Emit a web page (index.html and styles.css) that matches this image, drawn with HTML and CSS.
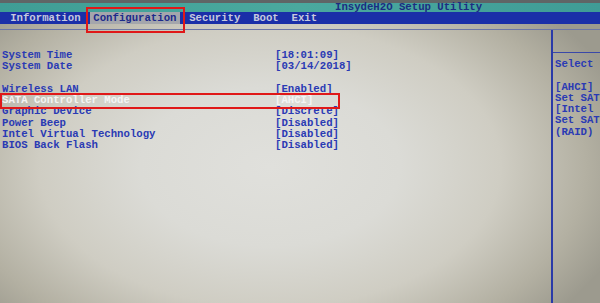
FILE: index.html
```html
<!DOCTYPE html>
<html>
<head>
<meta charset="utf-8">
<link rel="stylesheet" href="styles.css">
</head>
<body>
<div class="screen">
  <div class="topstrip"></div>
  <div class="titlebar"><span class="title">InsydeH2O Setup Utility</span></div>
  <div class="menubar">
    <span class="menu-item">Information</span>
    <span class="menu-item active marked">Configuration</span>
    <span class="menu-item">Security</span>
    <span class="menu-item">Boot</span>
    <span class="menu-item">Exit</span>
  </div>
  <div class="rule"></div>
  <div class="main">
    <div class="left">
      <div class="row"><span class="label">System Time</span><span class="value">[18:01:09]</span></div>
      <div class="row"><span class="label">System Date</span><span class="value">[03/14/2018]</span></div>
      <div class="row blank"></div>
      <div class="row"><span class="label">Wireless LAN</span><span class="value">[Enabled]</span></div>
      <div class="row selected marked-row"><span class="label">SATA Controller Mode</span><span class="value">[AHCI]</span></div>
      <div class="row"><span class="label">Graphic Device</span><span class="value">[Discrete]</span></div>
      <div class="row"><span class="label">Power Beep</span><span class="value">[Disabled]</span></div>
      <div class="row"><span class="label">Intel Virtual Technology</span><span class="value">[Disabled]</span></div>
      <div class="row"><span class="label">BIOS Back Flash</span><span class="value">[Disabled]</span></div>
    </div>
    <div class="right">
      <div class="help-head"></div>
      <div class="help">
        <div class="hrow">Select</div>
        <div class="hrow"></div>
        <div class="hrow">[AHCI]</div>
        <div class="hrow">Set SAT</div>
        <div class="hrow">[Intel</div>
        <div class="hrow">Set SAT</div>
        <div class="hrow">(RAID)</div>
      </div>
    </div>
  </div>
</div>
</body>
</html>
```
FILE: styles.css
```css
html, body {
  margin: 0;
  padding: 0;
}
body {
  width: 600px;
  height: 303px;
  overflow: hidden;
  font-family: "Liberation Mono", "DejaVu Sans Mono", monospace;
  font-weight: bold;
  font-size: 10.67px;
}
.screen {
  width: 600px;
  height: 303px;
  display: flex;
  flex-direction: column;
  background:
    radial-gradient(ellipse 62% 75% at 45% 55%, #e0e0dc 0%, #dbdbd6 35%, #cfcdc3 62%, #b3b0a2 85%, #9c9a8e 100%);
}
.topstrip {
  height: 3px;
  background: #5f6566;
}
.titlebar {
  height: 9px;
  background: linear-gradient(90deg, #3f9d95, #4aa99f 50%, #3f9c96);
  line-height: 9px;
  padding-left: 335px;
  color: #1b2d82;
  position: relative;
  z-index: 1;
}
.menubar {
  height: 12px;
  background: #1a2fa8;
  display: flex;
  padding-left: 7px;
  gap: 6.4px;
  line-height: 12px;
  color: #c6c9de;
}
.menu-item {
  padding: 0 3.2px;
  position: relative;
}
.menu-item.active {
  background: #a4a6ac;
  color: #1c2a8a;
}
.marked::after {
  content: "";
  position: absolute;
  left: -4px;
  right: -5px;
  top: -5px;
  bottom: -9px;
  border: 2px solid #e01818;
  z-index: 2;
}
.rule {
  margin-top: 5px;
  height: 1px;
  background: #6c76a6;
}
.main {
  flex: 1;
  display: flex;
}
.left {
  width: 551px;
  padding-top: 20px;
  color: #2a3ab4;
}
.row {
  display: grid;
  grid-template-columns: 273px auto;
  padding-left: 2px;
  height: 11.25px;
  line-height: 11.25px;
  white-space: nowrap;
}
.row.selected {
  color: #f4f4f4;
  position: relative;
}
.marked-row::after {
  content: "";
  position: absolute;
  left: 0;
  width: 336px;
  top: -2px;
  bottom: -3px;
  border: 2px solid #e01818;
}
.right {
  flex: 1;
  border-left: 2px solid #2a3aa8;
  overflow: hidden;
  color: #2a3ab4;
}
.help-head {
  height: 22px;
  border-bottom: 1px solid #3a48a8;
}
.help {
  padding-top: 6px;
  padding-left: 2px;
}
.hrow {
  height: 11.25px;
  line-height: 11.25px;
  white-space: nowrap;
}
```
